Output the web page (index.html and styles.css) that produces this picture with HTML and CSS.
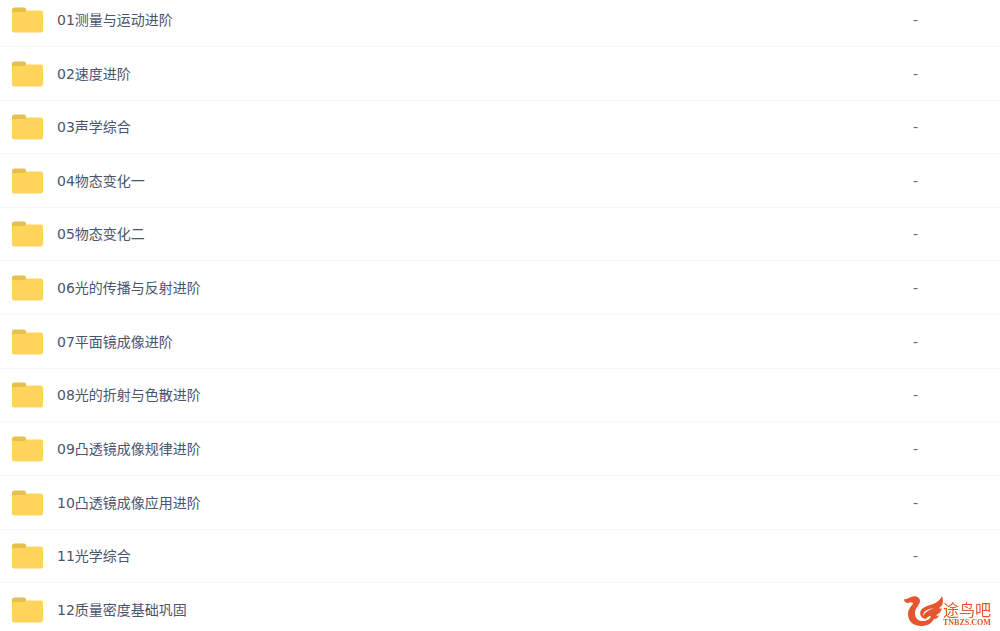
FILE: index.html
```html
<!DOCTYPE html>
<html lang="zh-CN">
<head>
    <meta charset="UTF-8">
    <meta name="viewport" content="width=device-width, initial-scale=1.0">
    <title>文件列表</title>
    <link rel="stylesheet" href="styles.css">
</head>
<body>

<svg class="symbols" aria-hidden="true">
    <symbol id="folder" viewBox="0 0 31 26">
        <path d="M0 3a2.500 2.500 0 0 1 2.500-2.500H12a2 2 0 0 1 2 2V9H0z" fill="#e6bf4e"/>
        <path d="M0 6Q0 5 1 5H12.500L14.500 3.500H29a2 2 0 0 1 2 2V23.500a2 2 0 0 1-2 2H2a2 2 0 0 1-2-2z" fill="#ffd45a"/>
    </symbol>
</svg>

<table class="file-list">
    <tbody>
        <tr><td class="name"><svg class="folder"><use href="#folder"/></svg><span>01测量与运动进阶</span></td><td class="size">-</td></tr>
        <tr><td class="name"><svg class="folder"><use href="#folder"/></svg><span>02速度进阶</span></td><td class="size">-</td></tr>
        <tr><td class="name"><svg class="folder"><use href="#folder"/></svg><span>03声学综合</span></td><td class="size">-</td></tr>
        <tr><td class="name"><svg class="folder"><use href="#folder"/></svg><span>04物态变化一</span></td><td class="size">-</td></tr>
        <tr><td class="name"><svg class="folder"><use href="#folder"/></svg><span>05物态变化二</span></td><td class="size">-</td></tr>
        <tr><td class="name"><svg class="folder"><use href="#folder"/></svg><span>06光的传播与反射进阶</span></td><td class="size">-</td></tr>
        <tr><td class="name"><svg class="folder"><use href="#folder"/></svg><span>07平面镜成像进阶</span></td><td class="size">-</td></tr>
        <tr><td class="name"><svg class="folder"><use href="#folder"/></svg><span>08光的折射与色散进阶</span></td><td class="size">-</td></tr>
        <tr><td class="name"><svg class="folder"><use href="#folder"/></svg><span>09凸透镜成像规律进阶</span></td><td class="size">-</td></tr>
        <tr><td class="name"><svg class="folder"><use href="#folder"/></svg><span>10凸透镜成像应用进阶</span></td><td class="size">-</td></tr>
        <tr><td class="name"><svg class="folder"><use href="#folder"/></svg><span>11光学综合</span></td><td class="size">-</td></tr>
        <tr><td class="name"><svg class="folder"><use href="#folder"/></svg><span>12质量密度基础巩固</span></td><td class="size"></td></tr>
    </tbody>
</table>

<div class="watermark">
    <svg class="bird" viewBox="0 0 40 32" aria-hidden="true">
        <path d="M1 4C3 5 5 3 8 2C12 0 17 2 17 6C17 10 12 13 12 18C12 23 15 26 19 26C24 26 27 24 28 21C26 21 24 22 23 24C17 23 15 17 20 13C26 9 35 10 39 1C41 7 40 11 36 13C37 14 38 14 39 13C38 17 36 19 33 20C34 21 35 21 36 20C35 23 33 24 31 24C28 29 24 31 18 31C10 31 5 26 5 19C5 13 10 10 10 8C9 7 7 7 5 8C3 8 1 7 1 4z" fill="#e4572e"/>
        <path d="M20 21C20 16 25 14 31 13C26 15 22 17 20 21z" fill="#fff"/>
    </svg>
    <div class="brand">
        <span class="brand-name">途鸟吧</span>
        <span class="brand-site">TNBZS.COM</span>
    </div>
</div>

</body>
</html>
```
FILE: styles.css
```css
body {
    margin: 0;
    background-color: #fff;
    color: #4a556d;
    font-family: "DejaVu Sans", "Noto Sans CJK SC", sans-serif;
    font-size: 14px;
    overflow: hidden;
}
.symbols {
    display: none;
}
.file-list {
    width: 100%;
    border-collapse: separate;
    border-spacing: 0;
    /* list is scrolled slightly past its first row */
    margin-top: -7px;
}
.file-list td {
    box-sizing: border-box;
    height: 54px;
    padding: 0;
    border-bottom: 1px solid #f4f6f9;
    line-height: 20px;
    vertical-align: middle;
}
.file-list tr:nth-child(3) td,
.file-list tr:nth-child(5) td,
.file-list tr:nth-child(8) td,
.file-list tr:nth-child(11) td {
    height: 53px;
}
.file-list .name {
    padding-left: 12px;
}
.name span {
    vertical-align: middle;
}
.folder {
    width: 31px;
    height: 26px;
    margin-right: 14px;
    vertical-align: middle;
}
.file-list .size {
    width: 87px;
    color: #666;
}
.watermark {
    position: fixed;
    right: 9px;
    bottom: 4px;
    display: flex;
    align-items: flex-end;
    color: #e4572e;
}
.bird {
    width: 40px;
    height: 32px;
}
.brand {
    display: flex;
    flex-direction: column;
    gap: 3px;
}
.brand-name {
    font-family: "Noto Sans CJK SC", sans-serif;
    font-size: 16px;
    line-height: 14px;
}
.brand-site {
    font-family: "Liberation Serif", serif;
    font-size: 8px;
    font-weight: bold;
    line-height: 8px;
}
```
